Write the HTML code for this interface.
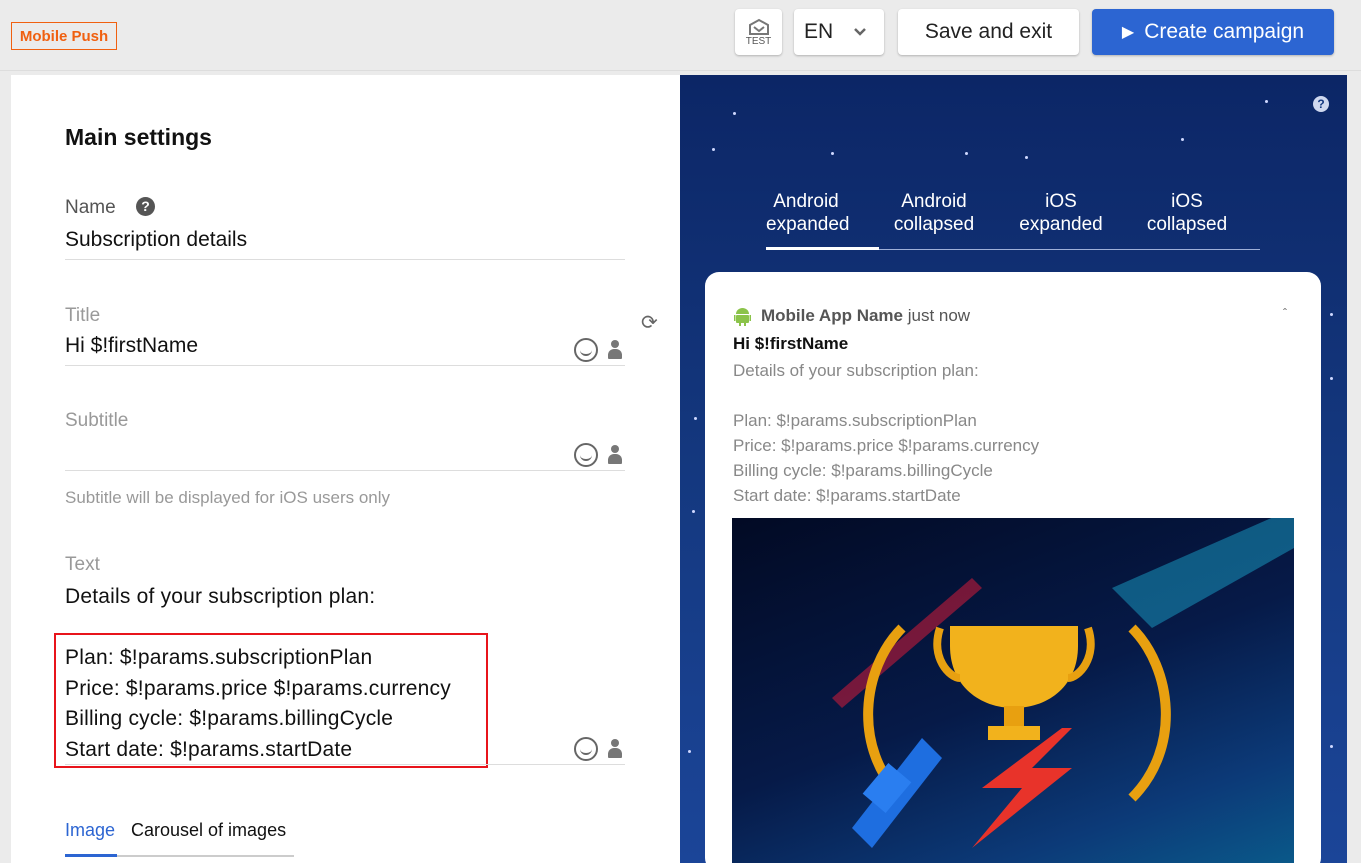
<!DOCTYPE html>
<html><head><meta charset="utf-8"><style>
*{box-sizing:border-box;margin:0;padding:0}
html,body{width:1361px;height:863px;overflow:hidden}
body{background:#ebebeb;font-family:"Liberation Sans",sans-serif;position:relative}
.abs{position:absolute}
.btn{position:absolute;background:#fff;border-radius:4px;box-shadow:0 1px 2px rgba(0,0,0,.25);display:flex;align-items:center;justify-content:center;font-size:21px;color:#222}
.lbl{position:absolute;left:65px;font-size:19px;color:#999}
.val{position:absolute;left:65px;font-size:21px;color:#111}
.line{position:absolute;left:65px;width:560px;height:1px;background:#ddd}
.emo{position:absolute;width:24px;height:24px;border:2px solid #666;border-radius:50%}
.emo:after{content:"";position:absolute;left:4px;top:9px;width:12px;height:5px;border-bottom:2px solid #666;border-radius:0 0 8px 8px}
.per{position:absolute;width:14px;height:20px}
.per:before{content:"";position:absolute;left:3px;top:0;width:8px;height:8px;border-radius:50%;background:#777}
.per:after{content:"";position:absolute;left:0;top:9px;width:14px;height:10px;border-radius:6px 6px 1px 1px;background:#777}
.star{position:absolute;width:3px;height:3px;border-radius:50%;background:#cfd8ff}
.tab{position:absolute;top:190px;color:#fff;font-size:19px;text-align:center;line-height:23px}
.pv{position:absolute;left:733px;font-size:17px;color:#888}
</style></head><body>
<div class="abs" style="left:11px;top:22px;width:106px;height:28px;border:1px solid #f06010;color:#f06010;font-size:15px;font-weight:bold;display:flex;align-items:center;justify-content:center">Mobile Push</div>
<div class="btn" style="left:735px;top:9px;width:47px;height:46px;flex-direction:column;font-size:10px;color:#555"><svg width="22" height="18" viewBox="0 0 22 18"><path d="M2 16V7L11 2L20 7V16Z" fill="none" stroke="#777" stroke-width="2"/><path d="M6 9L11 13L16 9" fill="none" stroke="#777" stroke-width="2"/></svg>TEST</div>
<div class="btn" style="left:794px;top:9px;width:90px;height:46px;justify-content:flex-start;padding-left:10px">EN<svg style="margin-left:20px" width="14" height="10" viewBox="0 0 14 10"><path d="M2 2L7 7L12 2" fill="none" stroke="#666" stroke-width="2.5"/></svg></div>
<div class="btn" style="left:898px;top:9px;width:181px;height:46px">Save and exit</div>
<div class="btn" style="left:1092px;top:9px;width:242px;height:46px;background:#2c65d2;color:#fff;font-size:21px"><span style="font-size:16px;margin-right:10px">▶</span>Create campaign</div>
<div class="abs" style="left:0;top:70px;width:1361px;height:1px;background:#ddd"></div>

<div class="abs" style="left:11px;top:75px;width:669px;height:788px;background:#fff"></div>
<div class="abs" style="left:65px;top:124px;font-size:23px;font-weight:bold;color:#111">Main settings</div>
<div class="lbl" style="top:197px;color:#555">Name</div>
<div class="abs" style="left:136px;top:197px;width:19px;height:19px;border-radius:50%;background:#555;color:#fff;font-size:14px;font-weight:bold;text-align:center;line-height:19px">?</div>
<div class="val" style="top:228px">Subscription details</div>
<div class="line" style="top:259px"></div>
<div class="lbl" style="top:305px">Title</div>
<div class="val" style="top:334px">Hi $!firstName</div>
<div class="emo" style="left:574px;top:338px"></div><div class="per" style="left:608px;top:340px"></div>
<div class="line" style="top:365px"></div>
<div class="abs" style="left:641px;top:310px;font-size:20px;color:#666">⟳</div>
<div class="lbl" style="top:410px">Subtitle</div>
<div class="emo" style="left:574px;top:443px"></div><div class="per" style="left:608px;top:445px"></div>
<div class="line" style="top:470px"></div>
<div class="lbl" style="top:488px;font-size:17px">Subtitle will be displayed for iOS users only</div>
<div class="lbl" style="top:554px">Text</div>
<div class="val" style="top:582px;font-size:21px;line-height:30.5px;letter-spacing:.2px">Details of your subscription plan:<br><br>Plan: $!params.subscriptionPlan<br>Price: $!params.price $!params.currency<br>Billing cycle: $!params.billingCycle<br>Start date: $!params.startDate</div>
<div class="abs" style="left:54px;top:633px;width:434px;height:135px;border:2px solid #e8141b"></div>
<div class="emo" style="left:574px;top:737px"></div><div class="per" style="left:608px;top:739px"></div>
<div class="line" style="top:764px"></div>
<div class="abs" style="left:65px;top:820px;font-size:18px;color:#2c65d2">Image</div>
<div class="abs" style="left:131px;top:820px;font-size:18px;color:#111">Carousel of images</div>
<div class="abs" style="left:65px;top:855px;width:229px;height:2px;background:#ccc"></div>
<div class="abs" style="left:65px;top:854px;width:52px;height:3px;background:#2c65d2"></div>

<div class="abs" style="left:680px;top:75px;width:667px;height:788px;background:linear-gradient(180deg,#0c2666 0%,#14387f 50%,#1b4598 100%)"></div>
<div class="star" style="left:733px;top:112px"></div><div class="star" style="left:831px;top:152px"></div><div class="star" style="left:965px;top:152px"></div><div class="star" style="left:1025px;top:156px"></div><div class="star" style="left:1181px;top:138px"></div><div class="star" style="left:1265px;top:100px"></div><div class="star" style="left:712px;top:148px"></div><div class="star" style="left:1330px;top:377px"></div><div class="star" style="left:1330px;top:313px"></div><div class="star" style="left:692px;top:510px"></div><div class="star" style="left:694px;top:417px"></div><div class="star" style="left:688px;top:750px"></div><div class="star" style="left:1330px;top:745px"></div>
<div class="abs" style="left:1313px;top:96px;width:16px;height:16px;border-radius:50%;background:#cfd8ef;color:#14387f;font-size:12px;font-weight:bold;text-align:center;line-height:16px">?</div>
<div class="tab" style="left:766px;width:80px">Android<br>expanded</div>
<div class="tab" style="left:890px;width:88px">Android<br>collapsed</div>
<div class="tab" style="left:1018px;width:86px">iOS<br>expanded</div>
<div class="tab" style="left:1143px;width:88px">iOS<br>collapsed</div>
<div class="abs" style="left:766px;top:249px;width:494px;height:1px;background:#9fb0d8"></div>
<div class="abs" style="left:766px;top:247px;width:113px;height:3px;background:#fff"></div>
<div class="abs" style="left:705px;top:272px;width:616px;height:600px;background:#fff;border-radius:14px"></div>
<svg class="abs" style="left:734px;top:307px" width="17" height="19" viewBox="0 0 17 19"><path d="M2 7a6.5 6 0 0 1 13 0z" fill="#8bc34a"/><rect x="2" y="8" width="13" height="8" rx="1" fill="#8bc34a"/><rect x="0" y="8" width="1.5" height="6" fill="#8bc34a"/><rect x="15.5" y="8" width="1.5" height="6" fill="#8bc34a"/><rect x="5" y="15" width="2" height="4" fill="#8bc34a"/><rect x="10" y="15" width="2" height="4" fill="#8bc34a"/></svg>
<div class="abs" style="left:761px;top:306px;font-size:17px;color:#555"><b>Mobile App Name</b> just now</div>
<div class="abs" style="left:1283px;top:306px;font-size:12px;color:#666">ˆ</div>
<div class="abs" style="left:733px;top:334px;font-size:17px;font-weight:bold;color:#111">Hi $!firstName</div>
<div class="pv" style="top:358px;line-height:25px">Details of your subscription plan:<br><br>Plan: $!params.subscriptionPlan<br>Price: $!params.price $!params.currency<br>Billing cycle: $!params.billingCycle<br>Start date: $!params.startDate</div>
<div class="abs" style="left:732px;top:518px;width:562px;height:350px;background:linear-gradient(160deg,#020a24 0%,#061a48 50%,#0c3a78 80%,#0a5a8a 100%);overflow:hidden">
<svg width="562" height="350" viewBox="0 0 562 350">
<path d="M380 70L562 -10V30L420 110Z" fill="#1aa0c8" opacity=".5"/>
<path d="M100 180L240 60L250 70L110 190Z" fill="#c21a3a" opacity=".6"/>
<path d="M218 108h128v20c0 40-30 62-64 62s-64-22-64-62z" fill="#f2b21c"/>
<path d="M208 110c-10 30 10 50 20 50M356 110c10 30-10 50-20 50" fill="none" stroke="#e8a010" stroke-width="8"/>
<rect x="272" y="188" width="20" height="22" fill="#e8a010"/><rect x="256" y="208" width="52" height="14" fill="#f2b21c"/>
<path d="M170 110c-40 40-50 120 0 170" fill="none" stroke="#e8a010" stroke-width="10"/>
<path d="M400 110c40 40 50 120 0 170" fill="none" stroke="#e8a010" stroke-width="10"/>
<path d="M190 220l-70 90l20 20l70-90z" fill="#1e6ee0"/>
<rect x="140" y="250" width="30" height="40" fill="#2a7ef0" transform="rotate(40 155 270)"/>
<path d="M330 210l-80 60h40l-50 60l100-80h-40l40-40z" fill="#e8332a"/>
</svg></div>
</body></html>
